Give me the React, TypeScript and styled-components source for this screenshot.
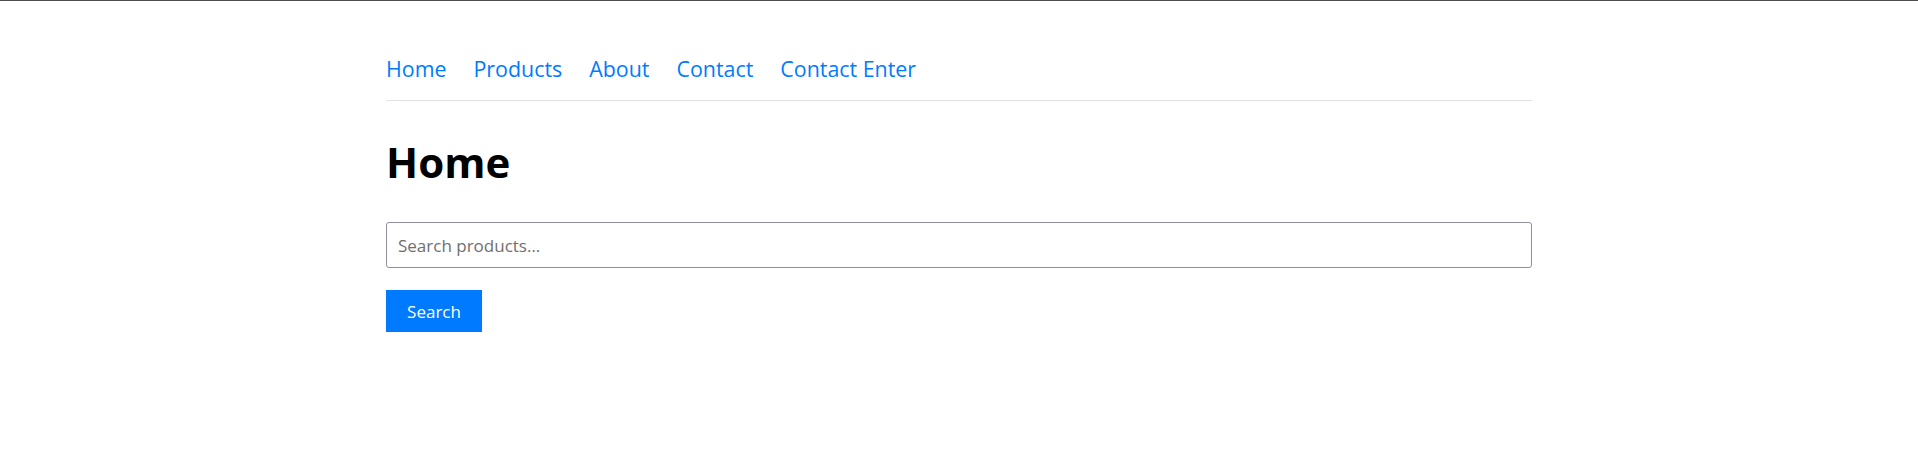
import styled, { createGlobalStyle } from "styled-components";

const GlobalStyle = createGlobalStyle`
  html, body {
    margin: 0;
    padding: 0;
    background: #ffffff;
  }
  body {
    font-family: "Open Sans", "Noto Sans", sans-serif;
    border-top: 1px solid #4d4d4d;
  }
`;

const links: string[] = ["Home", "Products", "About", "Contact", "Contact Enter"];

const App = () => {
  return (
    <>
      <GlobalStyle />
      <Container>
        <Nav>
          {links.map((l) => (
            <NavLink key={l} href="#">
              {l}
            </NavLink>
          ))}
        </Nav>
        <Title>Home</Title>
        <SearchForm onSubmit={(e) => e.preventDefault()}>
          <SearchInput type="text" placeholder="Search products…" />
          <SearchButton type="submit">Search</SearchButton>
        </SearchForm>
      </Container>
    </>
  );
};

const Container = styled.div`
  width: 1146px;
  margin: 0 auto;
  padding-top: 52px;
  box-sizing: border-box;
`;

const Nav = styled.nav`
  display: flex;
  flex-direction: row;
  gap: 27px;
  padding-bottom: 15px;
  border-bottom: 1px solid #dfe1e6;
`;

const NavLink = styled.a`
  font-size: 21.4px;
  line-height: 32px;
  color: #007bff;
  text-decoration: none;
`;

const Title = styled.h1`
  margin: 36px 0 0;
  font-size: 42px;
  line-height: 50px;
  font-weight: 700;
  color: #000000;
`;

const SearchForm = styled.form`
  display: flex;
  flex-direction: column;
  align-items: flex-start;
  gap: 22px;
  margin-top: 35px;
`;

const SearchInput = styled.input`
  width: 100%;
  height: 46px;
  box-sizing: border-box;
  padding: 0 11px;
  font-family: "Open Sans", sans-serif;
  font-size: 17px;
  color: #333333;
  border: 1px solid #8f8f9d;
  border-radius: 3px;
  outline: none;
  &::placeholder {
    color: #6f6f6f;
  }
`;

const SearchButton = styled.button`
  width: 96px;
  height: 42px;
  padding: 0;
  background: #007bff;
  color: #ffffff;
  border: none;
  font-family: "Open Sans", sans-serif;
  font-size: 17px;
  cursor: pointer;
`;

export default App;
